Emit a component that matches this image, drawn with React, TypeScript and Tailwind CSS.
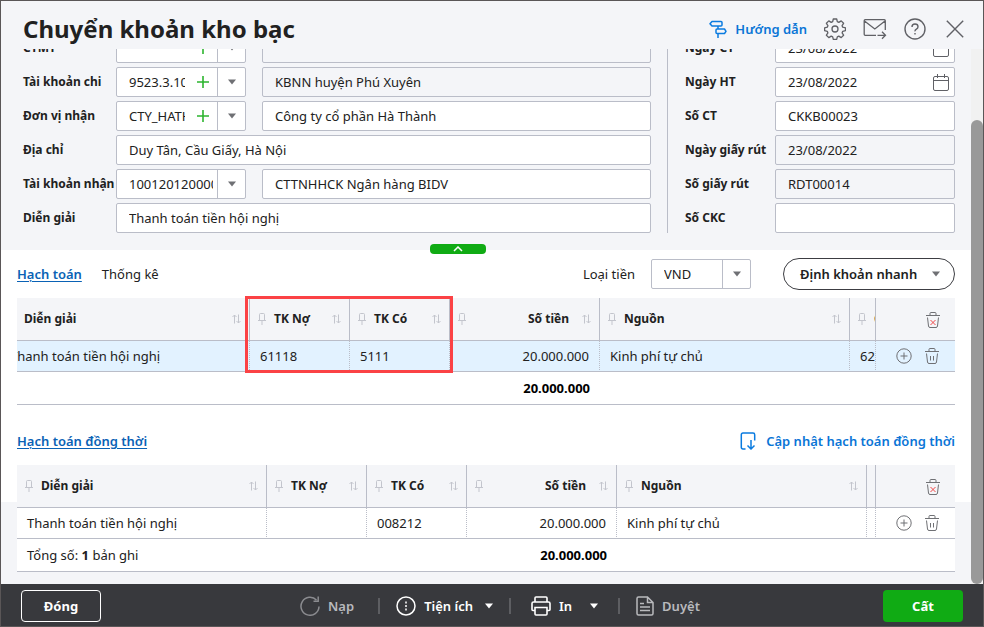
import React from "react";
import clsx from "clsx";

type ComboProps = {
  id: string;
  label: string;
  value: string;
  addable?: boolean;
};

type AccountRow = {
  description: string;
  debit: string;
  credit: string;
  amount: string;
  source: string;
  chapter: string;
};

const Caret = ({ className }: { className?: string }) => (
  <svg viewBox="0 0 8 6" className={clsx("h-1.5 w-2 fill-current", className)}>
    <path d="M0 .5h8L4 5.5z" />
  </svg>
);

const PinIcon = () => (
  <svg
    viewBox="0 0 12 14"
    className="h-3.5 w-3 shrink-0 fill-none stroke-[#c3c5cd]"
  >
    <path d="M3.5 8.5v-6q0-1 1-1h3q1 0 1 1v6M2 8.5h8M6 8.5V13" />
  </svg>
);

const SortIcon = () => (
  <svg
    viewBox="0 0 12 12"
    className="h-3 w-3 shrink-0 fill-none stroke-[#c3c5cd]"
  >
    <path d="M3.5 10.500V2M1.500 4l2-2 2 2M7.500 1.500V10M5.500 8l2 2 2-2" />
  </svg>
);

const TrashIcon = ({ all }: { all?: boolean }) => (
  <svg
    viewBox="0 0 16 18"
    className="h-[18px] w-4 fill-none stroke-[#6f7074]"
  >
    <path d="M1 4.500h14M5 4.500v-2q0-1 1-1h4q1 0 1 1v2M2.500 6.500l1 8.500q.2 1.500 1.500 1.500h6q1.300 0 1.500-1.500l1-8.500" />
    {all ? (
      <path d="M5.500 9l5 5M10.500 9l-5 5" className="stroke-[#f04a4a]" />
    ) : (
      <path d="M6.500 9v4.500M9.500 9v4.500" />
    )}
  </svg>
);

const PlusCircleIcon = () => (
  <svg viewBox="0 0 16 16" className="h-4 w-4 fill-none stroke-[#6f7074]">
    <circle cx="8" cy="8" r="7.200" />
    <path d="M4.500 8h7M8 4.500v7" />
  </svg>
);

const CalendarIcon = () => (
  <svg viewBox="0 0 16 17" className="h-[17px] w-4 fill-none stroke-[#606166]">
    <rect x=".5" y="2.500" width="15" height="14" rx="1.500" />
    <path d="M.5 6.500h15M4.500 0v4M11.500 0v4" />
  </svg>
);

const GuideIcon = () => (
  <svg
    viewBox="0 0 18 19"
    className="h-[19px] w-[18px] fill-none stroke-[#0a7be0] stroke-[1.5]"
  >
    <path
      strokeLinejoin="round"
      d="M3 1.500H12q1 0 1 1v2.500q0 1-1 1H3L1 3.700zM15.500 9H8q-1 0-1 1v2.500q0 1 1 1h7.500L17 11.300zM9 6v3M9 13.500V18"
    />
  </svg>
);

const GearIcon = () => (
  <svg
    viewBox="0 0 22 22"
    className="h-[22px] w-[22px] fill-none stroke-[#606166] stroke-[1.3]"
  >
    <circle cx="11" cy="11" r="3" />
    <path
      strokeLinejoin="round"
      d="M9.300 1h3.400l.6 2.700 1.500.7 2.400-1.500 2.400 2.400-1.500 2.400.6 1.500 2.800.6v2.800l-2.800.7-.6 1.600 1.500 2.300-2.400 2.400-2.400-1.500-1.500.7-.6 2.600H9.300l-.6-2.600-1.500-.7-2.400 1.500-2.400-2.400 1.500-2.300-.6-1.600L.6 12.600V9.800l2.700-.6.6-1.500-1.500-2.400 2.400-2.400 2.400 1.500 1.500-.7z"
    />
  </svg>
);

const MailIcon = () => (
  <svg
    viewBox="0 0 24 22"
    className="h-[22px] w-6 fill-none stroke-[#606166] stroke-[1.3]"
  >
    <path d="M22.300 12V2.700q0-1-1-1H2.200q-1 0-1 1v13.600q0 1 1 1H13M1.500 3l10.300 8L22 3M14.500 17.300h8M19 13.800l3.500 3.500-3.500 3.500" />
  </svg>
);

const HelpIcon = () => (
  <svg
    viewBox="0 0 22 22"
    className="h-[22px] w-[22px] fill-none stroke-[#606166] stroke-[1.4]"
  >
    <circle cx="11" cy="11" r="10" />
    <path d="M8 9q0-3 3-3t3 2.700q0 1.500-1.600 2.400T11 13.300M11 15v1.600" />
  </svg>
);

const CloseIcon = () => (
  <svg
    viewBox="0 0 18 18"
    className="h-[18px] w-[18px] fill-none stroke-[#606166] stroke-[1.4]"
  >
    <path d="M.8.8l16.400 16.400M17.200.8L.8 17.200" />
  </svg>
);

const UpdateIcon = () => (
  <svg
    viewBox="0 0 16 18"
    className="h-[18px] w-4 fill-none stroke-[#0a7be0] stroke-[1.5]"
  >
    <path d="M5.500 17H3q-1.700 0-1.700-1.700V2.700Q1.300 1 3 1h10q1.700 0 1.700 1.700v5.800M11 8v9M7.500 13.500L11 17l3.500-3.500" />
  </svg>
);

const ReloadIcon = () => (
  <svg
    viewBox="0 0 20 20"
    className="h-5 w-5 fill-none stroke-[#8b8c90] stroke-[1.5]"
  >
    <path d="M19 10.500A9 9 0 1 1 16.500 4M18.200.5v4.700h-4.700" />
  </svg>
);

const UtilityIcon = () => (
  <svg
    viewBox="0 0 20 20"
    className="h-5 w-5 fill-none stroke-white stroke-[1.5]"
  >
    <circle cx="10" cy="10" r="9" />
    <path d="M10 5.500v2M10 9v2M10 12.500v2" />
  </svg>
);

const PrintIcon = () => (
  <svg
    viewBox="0 0 20 20"
    className="h-5 w-5 fill-none stroke-white stroke-[1.6]"
  >
    <path d="M4 6V2q0-1 1-1h10q1 0 1 1v4M4 14.500H2q-1 0-1-1V7.500Q1 6 2.500 6h15Q19 6 19 7.500v6q0 1-1 1h-2M4 11.500h12V18q0 1-1 1H5q-1 0-1-1z" />
  </svg>
);

const ApproveIcon = () => (
  <svg
    viewBox="0 0 18 20"
    className="h-5 w-[18px] fill-none stroke-[#b9babd] stroke-[1.5]"
  >
    <path d="M11.500 1H2.500Q1 1 1 2.500v15Q1 19 2.500 19h13q1.500 0 1.500-1.500V6.500zM11.500 1v5.500H17M4 7.500h4M4 11h10M4 14.500h10" />
  </svg>
);

const labelClass = "shrink-0 whitespace-nowrap text-xs font-bold";
const boxClass =
  "h-[30px] rounded-xs border border-[#babdc8] bg-white text-[#212121]";

const TextBox = ({
  className,
  readOnly,
  ...props
}: React.ComponentProps<"input">) => (
  <input
    type="text"
    readOnly={readOnly}
    className={clsx(
      "h-[30px] min-w-0 flex-1 rounded-xs border border-[#babdc8] px-3 text-[#212121] outline-none",
      readOnly ? "bg-[#f4f5f8]" : "bg-white",
      className,
    )}
    {...props}
  />
);

const Combo = ({ id, label, value, addable }: ComboProps) => (
  <>
    <label htmlFor={id} className={clsx(labelClass, "w-[93px]")}>
      {label}
    </label>
    <div className={clsx(boxClass, "mr-4 flex w-[130px] shrink-0")}>
      <input
        id={id}
        type="text"
        defaultValue={value}
        className={clsx(
          "min-w-0 flex-1 bg-transparent pl-3 outline-none",
          !addable && "pr-1",
        )}
      />
      {addable && (
        <button
          type="button"
          aria-label={`Thêm ${label}`}
          className="flex w-8 items-center justify-center pl-1"
        >
          <svg
            viewBox="0 0 12 12"
            className="h-3 w-3 stroke-[#2db52f] stroke-[1.6]"
          >
            <path d="M0 6h12M6 0v12" />
          </svg>
        </button>
      )}
      <button
        type="button"
        aria-label={`Chọn ${label}`}
        className="flex w-7 items-center justify-center border-l border-[#babdc8] text-[#6f7074]"
      >
        <Caret />
      </button>
    </div>
  </>
);

const HeadCell = ({ title, right }: { title: string; right?: boolean }) => (
  <th className="overflow-hidden border-r border-b border-[#babdc8] bg-[#f4f5f8] p-0 text-xs font-bold">
    <div className="flex items-center px-1.5">
      <PinIcon />
      <span
        className={clsx("whitespace-nowrap", right ? "ml-auto" : "ml-1.5")}
      >
        {title}
      </span>
      <span className={clsx(right ? "ml-3" : "ml-auto")}>
        <SortIcon />
      </span>
    </div>
  </th>
);

const BodyCell = ({
  children,
  right,
}: {
  children?: React.ReactNode;
  right?: boolean;
}) => (
  <td
    className={clsx(
      "overflow-hidden border-r border-b border-[#babdc8] px-2.5 py-0 whitespace-nowrap [border-right-style:dotted]",
      right && "text-right",
    )}
  >
    {children}
  </td>
);

const footClass = "border-b border-[#babdc8] px-2.5 py-0";

const AccountTable = ({
  row,
  active,
  count,
}: {
  row: AccountRow;
  active?: boolean;
  count?: number;
}) => (
  <div className="flex bg-white">
    <div className="min-w-0 flex-1 overflow-hidden">
      <table
        className={clsx(
          "w-[1100px] table-fixed border-separate border-spacing-0",
          active && "-ml-[17px]",
        )}
      >
        <colgroup>
          <col className="w-[250px]" />
          <col className="w-[100px]" />
          <col className="w-[100px]" />
          <col className="w-[150px]" />
          <col className="w-[250px]" />
          <col className="w-[250px]" />
        </colgroup>
        <thead>
          <tr className="h-[43px] text-left">
            <HeadCell title="Diễn giải" />
            <HeadCell title="TK Nợ" />
            <HeadCell title="TK Có" />
            <HeadCell title="Số tiền" right />
            <HeadCell title="Nguồn" />
            <HeadCell title="Chương" />
          </tr>
        </thead>
        <tbody>
          <tr className={clsx("h-[31px]", active && "bg-[#e2f2ff]")}>
            <BodyCell>{row.description}</BodyCell>
            <BodyCell>{row.debit}</BodyCell>
            <BodyCell>{row.credit}</BodyCell>
            <BodyCell right>{row.amount}</BodyCell>
            <BodyCell>{row.source}</BodyCell>
            <BodyCell>{row.chapter}</BodyCell>
          </tr>
        </tbody>
        <tfoot>
          <tr className="h-[33px]">
            <td className={footClass} colSpan={3}>
              {count !== undefined && (
                <>
                  Tổng số: <b>{count}</b> bản ghi
                </>
              )}
            </td>
            <td className={clsx(footClass, "text-right font-bold text-black")}>
              {row.amount}
            </td>
            <td className={footClass} colSpan={2} />
          </tr>
        </tfoot>
      </table>
    </div>
    <div className="w-20 shrink-0">
      <div className="flex h-[43px] items-center justify-end border-b border-l border-[#babdc8] bg-[#f4f5f8] pt-px pr-3.5">
        <button type="button" aria-label="Xóa tất cả">
          <TrashIcon all />
        </button>
      </div>
      <div
        className={clsx(
          "flex h-[31px] items-center justify-end gap-3 border-b border-l border-[#babdc8] pr-[15px] [border-left-style:dotted]",
          active && "bg-[#e2f2ff]",
        )}
      >
        <button type="button" aria-label="Thêm dòng">
          <PlusCircleIcon />
        </button>
        <button type="button" aria-label="Xóa dòng">
          <TrashIcon />
        </button>
      </div>
      <div className="h-[33px] border-b border-[#babdc8]" />
    </div>
  </div>
);

const entry: AccountRow = {
  description: "Thanh toán tiền hội nghị",
  debit: "61118",
  credit: "5111",
  amount: "20.000.000",
  source: "Kinh phí tự chủ",
  chapter: "62",
};

const linkedEntry: AccountRow = {
  ...entry,
  debit: "",
  credit: "008212",
  chapter: "",
};

const voucherFields = [
  { id: "ngay-ct", label: "Ngày CT", value: "23/08/2022", date: true },
  { id: "ngay-ht", label: "Ngày HT", value: "23/08/2022", date: true },
  { id: "so-ct", label: "Số CT", value: "CKKB00023" },
  { id: "ngay-rut", label: "Ngày giấy rút", value: "23/08/2022", locked: true },
  { id: "so-rut", label: "Số giấy rút", value: "RDT00014", locked: true },
  { id: "so-ckc", label: "Số CKC", value: "" },
];

const iconButtonClass = "flex w-10 items-center justify-center";

const FooterDivider = () => <span className="h-4 w-0.5 bg-[#5d5e62]" />;

const App: React.FC = () => {
  return (
    <div className="flex h-screen flex-col border border-[#5a5657] bg-[#f4f5f8] font-['Noto_Sans',sans-serif] text-[13px] leading-5 text-[#212121]">
      <header className="flex h-12 shrink-0 items-center justify-between pt-2 pr-2 pl-[22px]">
        <h1 className="text-2xl font-bold whitespace-nowrap">
          Chuyển khoản kho bạc
        </h1>
        <div className="flex items-center">
          <a
            href="#huong-dan"
            className="mr-2 flex items-center gap-2 font-semibold whitespace-nowrap text-[#0a75d6]"
          >
            <GuideIcon />
            Hướng dẫn
          </a>
          <button
            type="button"
            aria-label="Thiết lập"
            className={iconButtonClass}
          >
            <GearIcon />
          </button>
          <button
            type="button"
            aria-label="Gửi thư"
            className={iconButtonClass}
          >
            <MailIcon />
          </button>
          <button
            type="button"
            aria-label="Trợ giúp"
            className={iconButtonClass}
          >
            <HelpIcon />
          </button>
          <button
            type="button"
            aria-label="Đóng cửa sổ"
            className={iconButtonClass}
          >
            <CloseIcon />
          </button>
        </div>
      </header>

      <div className="flex min-h-0 flex-1">
        <main className="min-w-0 flex-1 overflow-hidden">
          <form className="-mt-4 flex gap-4 pr-4 pb-[17px] pl-[22px]">
            <div className="flex min-w-0 flex-1 flex-col gap-1">
              <div className="flex items-center">
                <Combo id="ctmt" label="CTMT" value="" addable />
                <TextBox aria-label="Tên CTMT" readOnly />
              </div>
              <div className="flex items-center">
                <Combo
                  id="tk-chi"
                  label="Tài khoản chi"
                  value="9523.3.1044567"
                  addable
                />
                <TextBox
                  aria-label="Kho bạc"
                  readOnly
                  defaultValue="KBNN huyện Phú Xuyên"
                />
              </div>
              <div className="flex items-center">
                <Combo
                  id="dv-nhan"
                  label="Đơn vị nhận"
                  value="CTY_HATHANH"
                  addable
                />
                <TextBox
                  aria-label="Tên đơn vị nhận"
                  defaultValue="Công ty cổ phần Hà Thành"
                />
              </div>
              <div className="flex items-center">
                <label
                  htmlFor="dia-chi"
                  className={clsx(labelClass, "w-[93px]")}
                >
                  Địa chỉ
                </label>
                <TextBox
                  id="dia-chi"
                  defaultValue="Duy Tân, Cầu Giấy, Hà Nội"
                />
              </div>
              <div className="flex items-center">
                <Combo
                  id="tk-nhan"
                  label="Tài khoản nhận"
                  value="1001201200001"
                />
                <TextBox
                  aria-label="Ngân hàng nhận"
                  defaultValue="CTTNHHCK Ngân hàng BIDV"
                />
              </div>
              <div className="flex items-center">
                <label
                  htmlFor="dien-giai"
                  className={clsx(labelClass, "w-[93px]")}
                >
                  Diễn giải
                </label>
                <TextBox
                  id="dien-giai"
                  defaultValue="Thanh toán tiền hội nghị"
                />
              </div>
            </div>

            <div className="flex w-72 shrink-0 flex-col gap-1 border-l border-[#babdc8] pl-[17px]">
              {voucherFields.map(({ id, label, value, date, locked }) => (
                <div key={id} className="flex items-center">
                  <label htmlFor={id} className={clsx(labelClass, "w-[90px]")}>
                    {label}
                  </label>
                  {date ? (
                    <div className={clsx(boxClass, "flex min-w-0 flex-1")}>
                      <input
                        id={id}
                        type="text"
                        defaultValue={value}
                        className="min-w-0 flex-1 bg-transparent pl-3 outline-none"
                      />
                      <button
                        type="button"
                        aria-label={`Chọn ${label}`}
                        className="pr-[5px]"
                      >
                        <CalendarIcon />
                      </button>
                    </div>
                  ) : (
                    <TextBox id={id} defaultValue={value} readOnly={locked} />
                  )}
                </div>
              ))}
            </div>
          </form>

          <section className="relative h-[252px] bg-white px-4">
            <button
              type="button"
              aria-label="Thu gọn"
              className="absolute -top-1.5 left-[429px] flex h-2.5 w-14 items-center justify-center rounded-sm bg-[#10ab14]"
            >
              <svg
                viewBox="0 0 10 6"
                className="h-1.5 w-2.5 fill-none stroke-white stroke-[1.5]"
              >
                <path d="M1 5l4-4 4 4" />
              </svg>
            </button>

            <div className="flex h-12 items-center">
              <a
                href="#hach-toan"
                className="font-semibold text-[#0a62b5] underline underline-offset-2"
              >
                Hạch toán
              </a>
              <a href="#thong-ke" className="ml-5">
                Thống kê
              </a>
              <label htmlFor="loai-tien" className="mr-4 ml-auto">
                Loại tiền
              </label>
              <div className={clsx(boxClass, "flex w-[100px]")}>
                <select
                  id="loai-tien"
                  className="min-w-0 flex-1 appearance-none bg-transparent pl-3 outline-none"
                >
                  <option>VND</option>
                </select>
                <span className="flex w-7 items-center justify-center border-l border-[#babdc8] text-[#6f7074]">
                  <Caret />
                </span>
              </div>
              <button
                type="button"
                className="ml-8 flex h-8 w-[172px] items-center justify-between rounded-full border border-[#3c3d42] pr-3.5 pl-4 font-semibold whitespace-nowrap"
              >
                Định khoản nhanh
                <Caret className="text-[#6f7074]" />
              </button>
            </div>

            <AccountTable row={entry} active />
            <div className="pointer-events-none absolute top-[46px] left-[244px] h-[77px] w-52 border-3 border-[#fb4245]" />

            <div className="flex h-[60px] items-center justify-between pt-3">
              <a
                href="#dong-thoi"
                className="font-semibold text-[#0a62b5] underline underline-offset-2"
              >
                Hạch toán đồng thời
              </a>
              <a
                href="#cap-nhat"
                className="flex items-center gap-2.5 font-semibold text-[#0a75d6]"
              >
                <UpdateIcon />
                Cập nhật hạch toán đồng thời
              </a>
            </div>

            <AccountTable row={linkedEntry} count={1} />
          </section>
        </main>

        {/* scrollbar */}
        <div className="flex w-3 shrink-0 flex-col bg-[#f1f1f1] pt-[71px]">
          <div className="flex-1 rounded-full bg-[#999999]" />
        </div>
      </div>

      <footer className="flex h-[42px] shrink-0 items-center justify-between bg-[#38393d] px-5 pt-0.5 font-semibold text-white">
        <button
          type="button"
          className="h-8 w-20 rounded border border-white font-bold"
        >
          Đóng
        </button>
        <div className="flex items-center pl-4">
          <button
            type="button"
            className="mr-6 flex items-center gap-2 text-[#b9babd]"
          >
            <ReloadIcon />
            Nạp
          </button>
          <FooterDivider />
          <button type="button" className="mx-4 flex items-center gap-2">
            <UtilityIcon />
            Tiện ích
            <Caret className="ml-1" />
          </button>
          <FooterDivider />
          <button type="button" className="mr-5 ml-5 flex items-center gap-2">
            <PrintIcon />
            In
            <Caret className="ml-2.5" />
          </button>
          <FooterDivider />
          <button
            type="button"
            className="ml-4 flex items-center gap-2 text-[#b9babd]"
          >
            <ApproveIcon />
            Duyệt
          </button>
        </div>
        <button
          type="button"
          className="h-8 w-20 rounded bg-[#10ab14] font-bold"
        >
          Cất
        </button>
      </footer>
    </div>
  );
};

export default App;
